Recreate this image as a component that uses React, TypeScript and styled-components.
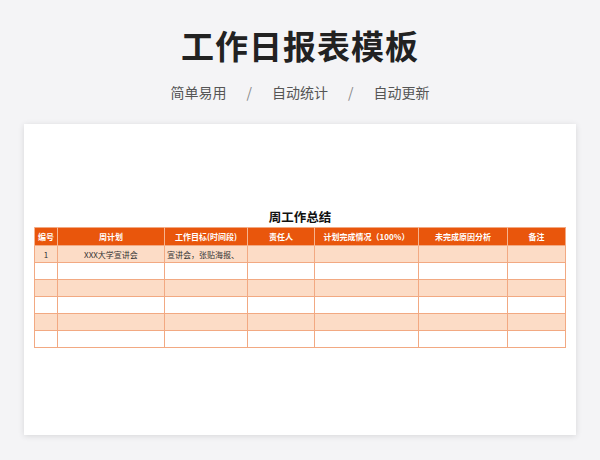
import React from "react";
import styled, { createGlobalStyle } from "styled-components";

const Global = createGlobalStyle`
  html, body { margin: 0; padding: 0; background: #f4f4f6; }
  body { font-family: "Noto Sans CJK SC", "Noto Sans", sans-serif; width: 600px; height: 460px; overflow: hidden; }
`;

const Page = styled.div`display: flex; flex-direction: column; align-items: center; padding-top: 22px;`;
const Title = styled.h1`margin: 0; font-size: 33px; line-height: 46px; font-weight: 700; color: #222; letter-spacing: 1px;`;
const Sub = styled.div`margin-top: 14px; display: flex; gap: 20px; font-size: 14px; color: #555; line-height: 20px;`;
const Sep = styled.span`color: #888;`;
const Card = styled.div`
  margin-top: 22px; width: 552px; height: 311px; background: #fff;
  box-shadow: 0 1px 6px rgba(0,0,0,0.12); box-sizing: border-box; padding: 83px 10px 0 10px;
  display: flex; flex-direction: column; align-items: center;
`;
const TTitle = styled.div`font-size: 12.5px; font-weight: 700; color: #111; line-height: 20px;`;
const Table = styled.table`
  border-collapse: collapse; width: 531px; table-layout: fixed; font-size: 8px;
  border: 1px solid #f2a982;
`;
const Th = styled.th`
  background: #e9560c; color: #fff; font-weight: 600; height: 17px; padding: 0;
  border-left: 1px solid #f6b48f; text-align: center;
`;
const Td = styled.td<{ $left?: boolean }>`
  height: 16px; padding: 0 2px; border: 1px solid #f2a982; color: #333;
  text-align: ${p => (p.$left ? "left" : "center")}; white-space: nowrap; overflow: hidden;
`;
const Tr = styled.tr<{ $alt: boolean }>`background: ${p => (p.$alt ? "#fcdcc6" : "#fff")};`;

const widths = [23, 107, 83, 67, 104, 89, 58];
const heads = ["编号", "周计划", "工作目标(时间段)", "责任人", "计划完成情况（100%）", "未完成原因分析", "备注"];

export default function App() {
  const rows = Array.from({ length: 6 }, (_, i) => i);
  return (
    <Page>
      <Global />
      <Title>工作日报表模板</Title>
      <Sub><span>简单易用</span><Sep>/</Sep><span>自动统计</span><Sep>/</Sep><span>自动更新</span></Sub>
      <Card>
        <TTitle>周工作总结</TTitle>
        <Table>
          <colgroup>{widths.map((w, i) => <col key={i} style={{ width: w }} />)}</colgroup>
          <thead><tr>{heads.map(h => <Th key={h}>{h}</Th>)}</tr></thead>
          <tbody>
            {rows.map(i => (
              <Tr key={i} $alt={i % 2 === 0}>
                <Td>{i === 0 ? "1" : ""}</Td>
                <Td>{i === 0 ? "XXX大学宣讲会" : ""}</Td>
                <Td $left>{i === 0 ? "宣讲会，张贴海报、" : ""}</Td>
                <Td /><Td /><Td /><Td />
              </Tr>
            ))}
          </tbody>
        </Table>
      </Card>
    </Page>
  );
}
